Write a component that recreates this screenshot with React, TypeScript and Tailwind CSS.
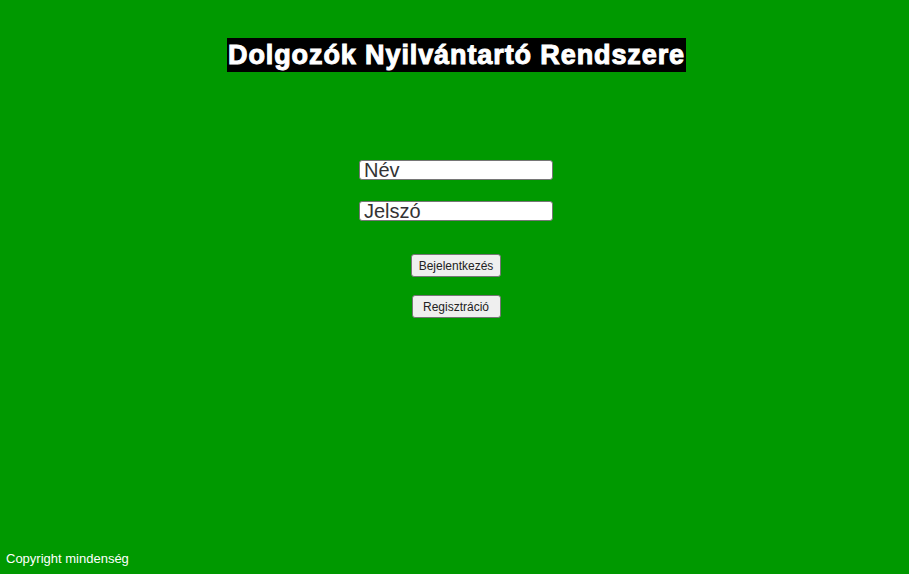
export default function App() {
  return (
    <div className="min-h-[574px] h-[574px] bg-[#009900] flex flex-col font-['Liberation_Sans',Arial,sans-serif]">
      <div className="pt-[38px] flex justify-center pl-[4px]">
        <h1 className="bg-black text-white text-[27px] leading-[34px] font-black tracking-[0.9px] px-[1px] [-webkit-text-stroke:1px_white]">
          Dolgozók Nyilvántartó Rendszere
        </h1>
      </div>
      <div className="flex flex-col items-center mt-[88px] pl-[3px]">
        <input
          type="text"
          placeholder="Név"
          className="w-[194px] h-[20px] bg-white border border-[#767676] rounded-[3px] px-[4px] text-[20px] leading-[18px] placeholder:text-[#333]"
        />
        <input
          type="password"
          placeholder="Jelszó"
          className="mt-[21px] w-[194px] h-[20px] bg-white border border-[#767676] rounded-[3px] px-[4px] text-[20px] leading-[18px] placeholder:text-[#333]"
        />
        <button className="mt-[33px] h-[23px] w-[90px] bg-[#efefef] border border-[#767676] rounded-[3px] text-[12px] text-[#222]">
          Bejelentkezés
        </button>
        <button className="mt-[18px] h-[23px] w-[89px] bg-[#efefef] border border-[#767676] rounded-[3px] text-[12px] text-[#222]">
          Regisztráció
        </button>
      </div>
      <div className="mt-auto pl-[6px] pb-[8px] text-white text-[13px] leading-[15px]">
        Copyright mindenség
      </div>
    </div>
  )
}
